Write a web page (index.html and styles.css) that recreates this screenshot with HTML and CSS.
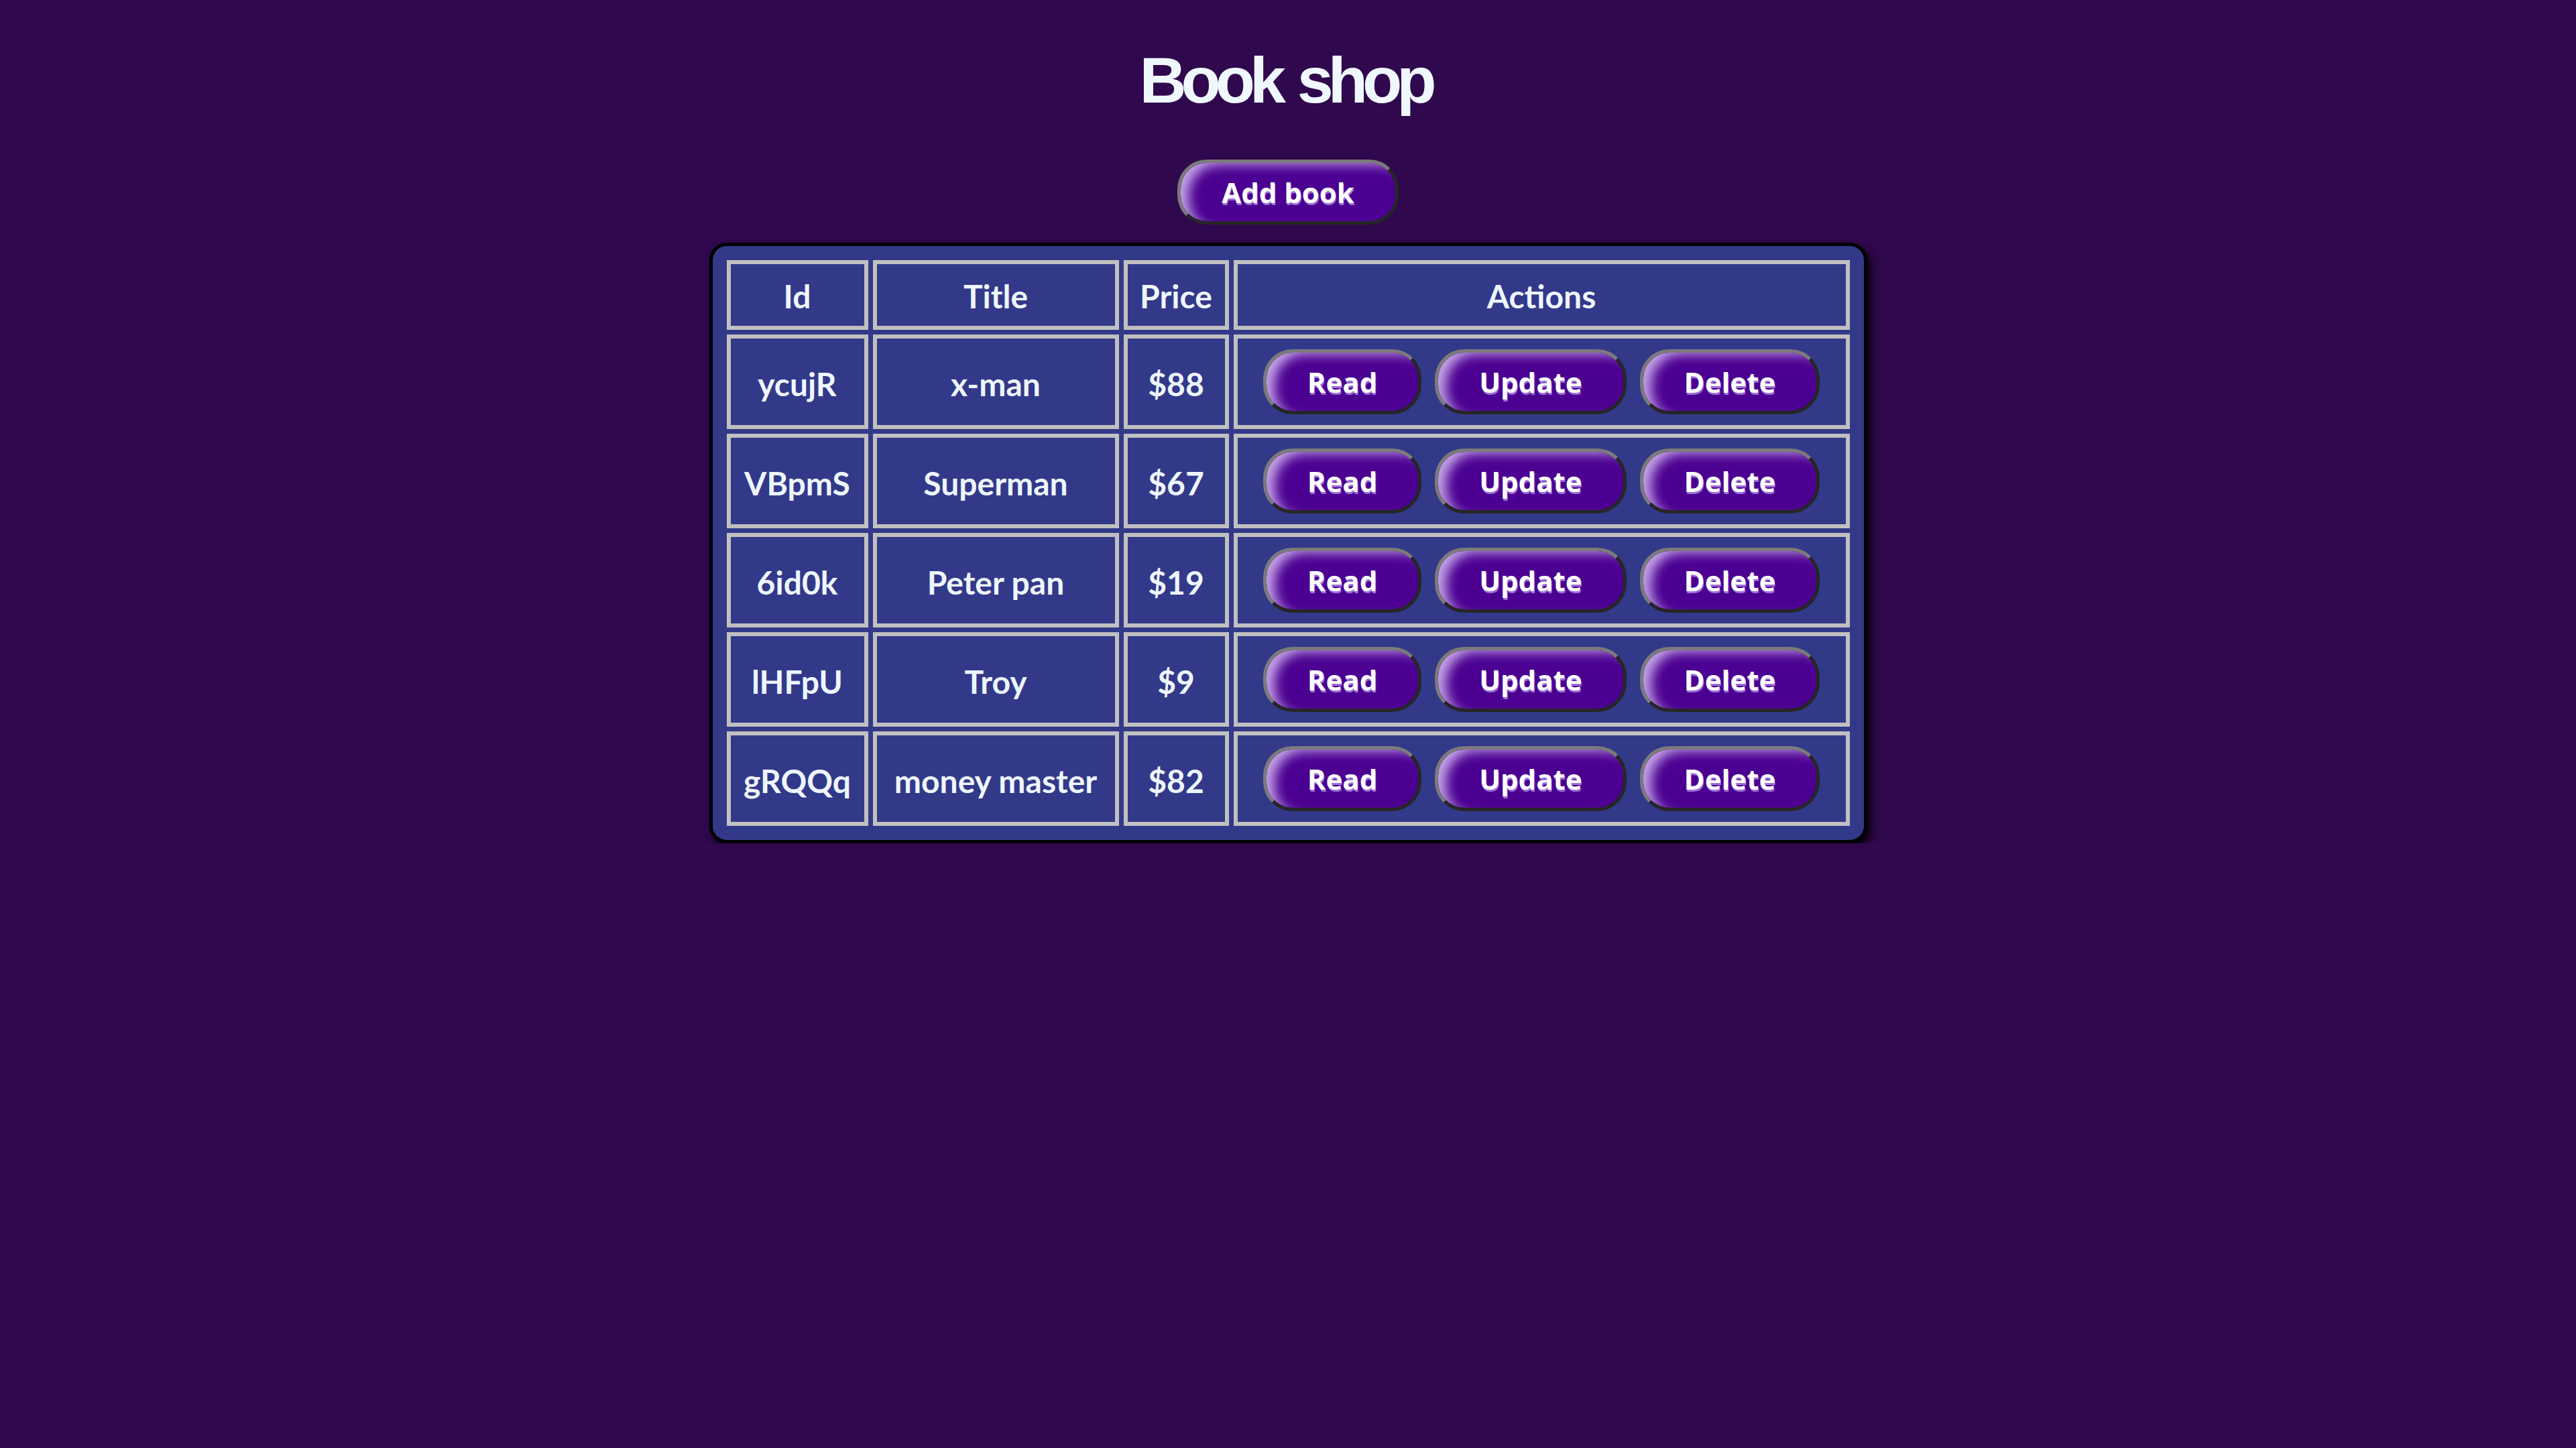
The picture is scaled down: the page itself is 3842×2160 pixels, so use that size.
FILE: index.html
```html
<!DOCTYPE html>
<html lang="en">
<head>
<meta charset="utf-8">
<title>Book shop</title>
<link rel="stylesheet" href="styles.css">
</head>
<body>
<main class="page">
  <h1 class="title">Book shop</h1>
  <button class="btn btn-add">Add book</button>
  <div class="table-card">
    <table class="books">
      <thead>
        <tr>
          <th class="col-id">Id</th>
          <th class="col-title">Title</th>
          <th class="col-price">Price</th>
          <th class="col-actions">Actions</th>
        </tr>
      </thead>
      <tbody>
        <tr>
          <td>ycujR</td><td>x-man</td><td>$88</td>
          <td><div class="actions"><button class="btn">Read</button><button class="btn">Update</button><button class="btn">Delete</button></div></td>
        </tr>
        <tr>
          <td>VBpmS</td><td>Superman</td><td>$67</td>
          <td><div class="actions"><button class="btn">Read</button><button class="btn">Update</button><button class="btn">Delete</button></div></td>
        </tr>
        <tr>
          <td>6id0k</td><td>Peter pan</td><td>$19</td>
          <td><div class="actions"><button class="btn">Read</button><button class="btn">Update</button><button class="btn">Delete</button></div></td>
        </tr>
        <tr>
          <td>lHFpU</td><td>Troy</td><td>$9</td>
          <td><div class="actions"><button class="btn">Read</button><button class="btn">Update</button><button class="btn">Delete</button></div></td>
        </tr>
        <tr>
          <td>gRQQq</td><td>money master</td><td>$82</td>
          <td><div class="actions"><button class="btn">Read</button><button class="btn">Update</button><button class="btn">Delete</button></div></td>
        </tr>
      </tbody>
    </table>
  </div>
</main>
</body>
</html>
```
FILE: styles.css
```css
html, body {
  margin: 0;
  min-height: 100%;
  background: #30084d;
}

body {
  font-family: "Liberation Sans", Arial, sans-serif;
  color: aliceblue;
}

.page {
  display: flex;
  flex-direction: column;
  align-items: center;
}

.title {
  margin: 64px 0 62px;
  padding-right: 8px;
  font: 700 97px/112px "Liberation Sans", Arial, sans-serif;
  letter-spacing: -8px;
  word-spacing: 6px;
  color: aliceblue;
}

.btn {
  font: 700 42px/57px "Open Sans", "Noto Sans", sans-serif;
  color: #ffffff;
  text-shadow: 1px 3px 0 #9b70d8;
  background: #4b0091;
  border: 5px solid;
  border-color: #7b7b7b #262626 #262626 #7b7b7b;
  border-radius: 44px;
  padding: 15px 61px;
  box-shadow: inset 18px 8px 18px -6px rgba(220, 195, 248, 0.85);
  cursor: pointer;
}

.table-card {
  margin-top: 27px;
  background: #333989;
  border: 5px solid #000000;
  border-radius: 26px;
  padding: 14px;
  box-shadow: 6px 8px 14px rgba(0, 0, 0, 0.85);
}

.books {
  border-collapse: separate;
  border-spacing: 7px;
}

.books th,
.books td {
  box-sizing: border-box;
  border: 6px solid #c0c0c0;
  text-align: center;
  vertical-align: middle;
  font: 700 48px/52px "Comic Sans MS", "Lato", sans-serif;
  color: #eef6ff;
}

.books th {
  padding: 22px 6px 18px;
}

.books td {
  padding: 16px 6px;
}

.books td:not(:last-child) {
  padding-top: 19px;
  padding-bottom: 13px;
}

.col-id { width: 211px; }
.col-title { width: 367px; }
.col-price { width: 157px; }
.col-actions { width: 919px; }

.actions {
  display: flex;
  justify-content: center;
  gap: 20px;
}
```
